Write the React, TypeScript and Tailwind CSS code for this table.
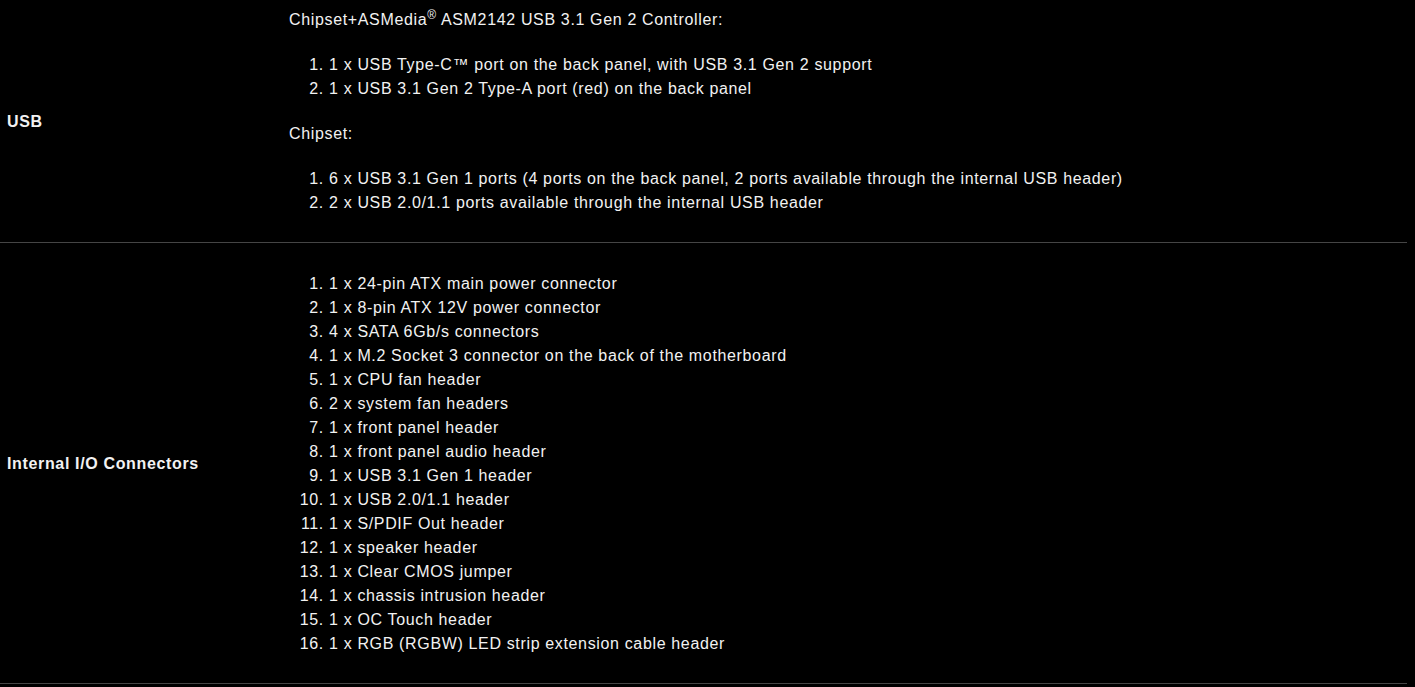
import React from 'react';

interface SpecRow {
  label: string;
  body: React.ReactNode;
}

const usbBackPanel = [
  '1 x USB Type-C™ port on the back panel, with USB 3.1 Gen 2 support',
  '1 x USB 3.1 Gen 2 Type-A port (red) on the back panel',
];

const usbChipset = [
  '6 x USB 3.1 Gen 1 ports (4 ports on the back panel, 2 ports available through the internal USB header)',
  '2 x USB 2.0/1.1 ports available through the internal USB header',
];

const internalIO = [
  '1 x 24-pin ATX main power connector',
  '1 x 8-pin ATX 12V power connector',
  '4 x SATA 6Gb/s connectors',
  '1 x M.2 Socket 3 connector on the back of the motherboard',
  '1 x CPU fan header',
  '2 x system fan headers',
  '1 x front panel header',
  '1 x front panel audio header',
  '1 x USB 3.1 Gen 1 header',
  '1 x USB 2.0/1.1 header',
  '1 x S/PDIF Out header',
  '1 x speaker header',
  '1 x Clear CMOS jumper',
  '1 x chassis intrusion header',
  '1 x OC Touch header',
  '1 x RGB (RGBW) LED strip extension cable header',
];

function NumberedList({ items }: { items: string[] }) {
  return (
    <ol className="list-decimal pl-10 my-[21px]">
      {items.map((item) => (
        <li key={item} className="leading-6">
          {item}
        </li>
      ))}
    </ol>
  );
}

const rows: SpecRow[] = [
  {
    label: 'USB',
    body: (
      <>
        <p className="leading-6">
          Chipset+ASMedia<sup className="text-[12px] leading-none">®</sup> ASM2142 USB 3.1 Gen 2
          Controller:
        </p>
        <NumberedList items={usbBackPanel} />
        <p className="leading-6">Chipset:</p>
        <NumberedList items={usbChipset} />
      </>
    ),
  },
  {
    label: 'Internal I/O Connectors',
    body: <NumberedList items={internalIO} />,
  },
];

export default function App() {
  return (
    <div
      className="min-h-[687px] bg-black text-[#f2f2f2] text-[16px] tracking-[0.65px]"
      style={{ fontFamily: '"Liberation Sans", Arial, sans-serif' }}
    >
      <div className="w-[1407px]">
        {rows.map((row) => (
          <div key={row.label} className="flex border-b border-[#454545]">
            <div className="w-[282px] shrink-0 flex items-center px-[7px] pt-[2px] font-bold">
              {row.label}
            </div>
            <div className="flex-1 px-[7px] pt-[8px] pb-[6px]">{row.body}</div>
          </div>
        ))}
      </div>
    </div>
  );
}
